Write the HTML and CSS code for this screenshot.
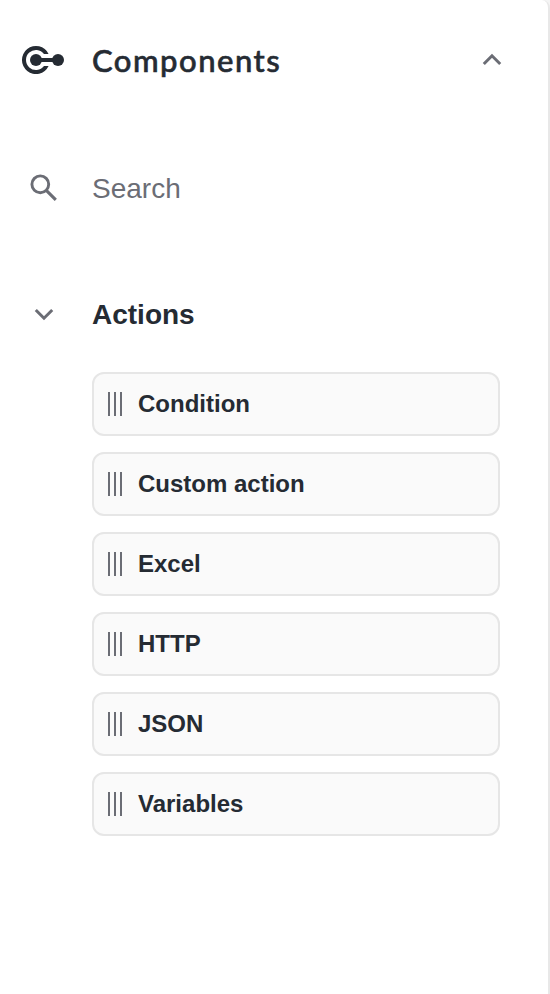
FILE: index.html
```html
<!DOCTYPE html>
<html lang="en">
<head>
<meta charset="utf-8">
<title>Components</title>
<link rel="stylesheet" href="styles.css">
</head>
<body>
<aside class="panel">
  <header class="row header">
    <svg class="logo" width="44" height="30" viewBox="0 0 44 30" fill="#252b33"><path d="M27.6 9A14 14 0 1 0 27.6 21H23A10 10 0 1 1 23 9ZM15 13H37V17H15Z"/><circle cx="15" cy="15" r="6"/><circle cx="37" cy="15" r="6"/></svg>
    <h1 class="title">Components</h1>
    <svg class="collapse" width="20" height="14" viewBox="0 0 20 14" fill="none" stroke="#6b6d75" stroke-width="3"><path d="M1.8 11L10 2.8L18.2 11"/></svg>
  </header>
  <div class="row search">
    <svg class="icon" width="44" height="36" viewBox="0 0 44 36" fill="none" stroke="#6b6d75"><circle cx="18.3" cy="14.3" r="8.4" stroke-width="2.9"/><path d="M24.3 20.3L33.8 29.8" stroke-width="3.1"/></svg>
    <span class="search-label">Search</span>
  </div>
  <section>
    <div class="row group">
      <svg class="icon" width="44" height="14" viewBox="0 0 44 14" fill="none" stroke="#6b6d75" stroke-width="3"><path d="M13.8 3L22 11.2L30.2 3"/></svg>
      <h2 class="group-title">Actions</h2>
    </div>
    <ul class="list">
      <li class="card"><i class="grip"></i>Condition</li>
      <li class="card"><i class="grip"></i>Custom action</li>
      <li class="card"><i class="grip"></i>Excel</li>
      <li class="card"><i class="grip"></i>HTTP</li>
      <li class="card"><i class="grip"></i>JSON</li>
      <li class="card"><i class="grip"></i>Variables</li>
    </ul>
  </section>
</aside>
</body>
</html>
```
FILE: styles.css
```css
* { box-sizing: border-box; }
body {
  margin: 0;
  background: #f4f4f4;
  color: #252b33;
  font-family: "Liberation Sans", Arial, sans-serif;
}
.panel {
  height: 994px;
  padding: 30px 48px 0 21px;
  border-right: 2px solid #e8e8e8;
  border-top-right-radius: 8px;
  background: #fff;
}
.row { display: flex; align-items: center; height: 60px; }
.row svg { flex: none; }
.logo { margin-right: 27px; }
.title {
  margin: 0 0 1px;
  font: 500 31px/40px Lato, sans-serif;
  letter-spacing: 1.5px;
  -webkit-text-stroke: 0.6px #252b33;
}
.collapse { margin-left: auto; margin-right: -2px; }
.search { margin-top: 68px; }
.icon { margin: 0 26px 0 1px; }
.search-label { margin-top: 2px; color: #6b6d75; font-size: 28px; line-height: 32px; }
.group { margin-top: 66px; }
.group-title { margin: 2px 0 0; font-size: 28px; line-height: 32px; }
.list {
  display: flex;
  flex-direction: column;
  gap: 16px;
  margin: 28px 0 0 71px;
  padding: 0;
  list-style: none;
}
.card {
  display: flex;
  align-items: center;
  gap: 16px;
  height: 64px;
  padding: 0 14px;
  border: 2px solid #e6e6e6;
  border-radius: 12px;
  background: #fafafa;
  font-size: 24px;
  font-weight: 700;
}
.grip {
  width: 14px;
  height: 24px;
  background: repeating-linear-gradient(to right, #6b6d75 0 2px, transparent 2px 6px);
}
```
